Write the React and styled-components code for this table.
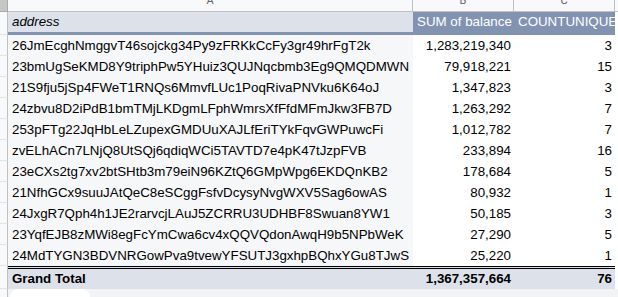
import React from "react";
import styled, { createGlobalStyle } from "styled-components";

const Global = createGlobalStyle`
  html, body { margin: 0; padding: 0; background: #ffffff; overflow: hidden; }
  body { font-family: "Liberation Sans", Arial, sans-serif; }
`;

const COLS = "8px 405px 101px 101px 1fr";
const BLUE = "#8293b2";
const LIGHT = "#dde2ea";

const Sheet = styled.div`
  margin-top: -10px;
  width: 618px;
  font-size: 13.33px;
  color: #000;
`;

const Row = styled.div`
  display: grid;
  grid-template-columns: ${COLS};
  height: ${(p) => p.$h}px;
`;

const RowHead = styled.div`
  box-sizing: border-box;
  background: #f8f9fa;
  border-right: 1px solid #c0c0c0;
  border-bottom: 1px solid #e2e3e3;
`;

const Corner = styled.div`
  box-sizing: border-box;
  background: #c4c7c5;
  border-right: 1px solid #a8abaa;
  border-bottom: 1px solid #a8abaa;
`;

const ColLetter = styled.div`
  box-sizing: border-box;
  background: #f8f9fa;
  border-right: ${(p) => (p.$edge ? "none" : "1px solid #c0c0c0")};
  border-bottom: 1px solid #c0c0c0;
  color: #5f6368;
  font-family: Roboto, "Liberation Sans", sans-serif;
  font-size: 11px;
  line-height: 21px;
  text-align: center;
`;

const HeaderCell = styled.div`
  box-sizing: border-box;
  padding: 0 3px 0 4px;
  white-space: nowrap;
  overflow: hidden;
  line-height: 20px;
  background: ${(p) => (p.$dark ? BLUE : LIGHT)};
  color: ${(p) => (p.$dark ? "#ffffff" : "#000000")};
  font-style: ${(p) => (p.$dark ? "normal" : "italic")};
  border-bottom: 3px solid ${BLUE};
`;

const Blank = styled.div`
  background: ${(p) => p.$bg || "#ffffff"};
`;

const DataCell = styled.div`
  box-sizing: border-box;
  padding: 0 3px 0 4px;
  line-height: 21px;
  white-space: nowrap;
  overflow: hidden;
  text-align: ${(p) => (p.$num ? "right" : "left")};
  background: ${(p) => (p.$num ? "#ffffff" : "#f6f7f9")};
`;

const TotalCell = styled.div`
  box-sizing: border-box;
  padding: 0 3px 0 4px;
  line-height: 20px;
  font-weight: bold;
  white-space: nowrap;
  text-align: ${(p) => (p.$num ? "right" : "left")};
  background: ${LIGHT};
  border-top: 3px double #000000;
`;

const FooterArea = styled.div`
  grid-column: 2 / 6;
  background: #f1f3f4;
  display: flex;
  align-items: flex-end;
  padding-left: 2px;
`;

const Tab = styled.div`
  width: 80px;
  height: 100%;
  background: #ffffff;
  border-radius: 8px 8px 0 0;
`;

const rows = [
  ["26JmEcghNmggvT46sojckg34Py9zFRKkCcFy3gr49hrFgT2k", "1,283,219,340", "3"],
  ["23bmUgSeKMD8Y9triphPw5YHuiz3QUJNqcbmb3Eg9QMQDMWN", "79,918,221", "15"],
  ["21S9fju5jSp4FWeT1RNQs6MmvfLUc1PoqRivaPNVku6K64oJ", "1,347,823", "3"],
  ["24zbvu8D2iPdB1bmTMjLKDgmLFphWmrsXfFfdMFmJkw3FB7D", "1,263,292", "7"],
  ["253pFTg22JqHbLeLZupexGMDUuXAJLfEriTYkFqvGWPuwcFi", "1,012,782", "7"],
  ["zvELhACn7LNjQ8UtSQj6qdiqWCi5TAVTD7e4pK47tJzpFVB", "233,894", "16"],
  ["23eCXs2tg7xv2btSHtb3m79eiN96KZtQ6GMpWpg6EKDQnKB2", "178,684", "5"],
  ["21NfhGCx9suuJAtQeC8eSCggFsfvDcysyNvgWXV5Sag6owAS", "80,932", "1"],
  ["24JxgR7Qph4h1JE2rarvcjLAuJ5ZCRRU3UDHBF8Swuan8YW1", "50,185", "3"],
  ["23YqfEJB8zMWi8egFcYmCwa6cv4xQQVQdonAwqH9b5NPbWeK", "27,290", "5"],
  ["24MdTYGN3BDVNRGowPva9tvewYFSUTJ3gxhpBQhxYGu8TJwS", "25,220", "1"],
];

export default function App() {
  return (
    <>
      <Global />
      <Sheet>
        <Row $h={22}>
          <Corner />
          <ColLetter>A</ColLetter>
          <ColLetter>B</ColLetter>
          <ColLetter>C</ColLetter>
          <ColLetter $edge />
        </Row>
        <Row $h={23}>
          <RowHead />
          <HeaderCell>address</HeaderCell>
          <HeaderCell $dark>SUM of balance</HeaderCell>
          <HeaderCell $dark>COUNTUNIQUE of sender</HeaderCell>
          <Blank />
        </Row>
        {rows.map(([addr, sum, cnt]) => (
          <Row $h={21} key={addr}>
            <RowHead />
            <DataCell>{addr}</DataCell>
            <DataCell $num>{sum}</DataCell>
            <DataCell $num>{cnt}</DataCell>
            <Blank />
          </Row>
        ))}
        <Row $h={23}>
          <RowHead />
          <TotalCell>Grand Total</TotalCell>
          <TotalCell $num>1,367,357,664</TotalCell>
          <TotalCell $num>76</TotalCell>
          <Blank />
        </Row>
        <Row $h={20}>
          <RowHead />
          <FooterArea>
            <Tab />
          </FooterArea>
        </Row>
      </Sheet>
    </>
  );
}
